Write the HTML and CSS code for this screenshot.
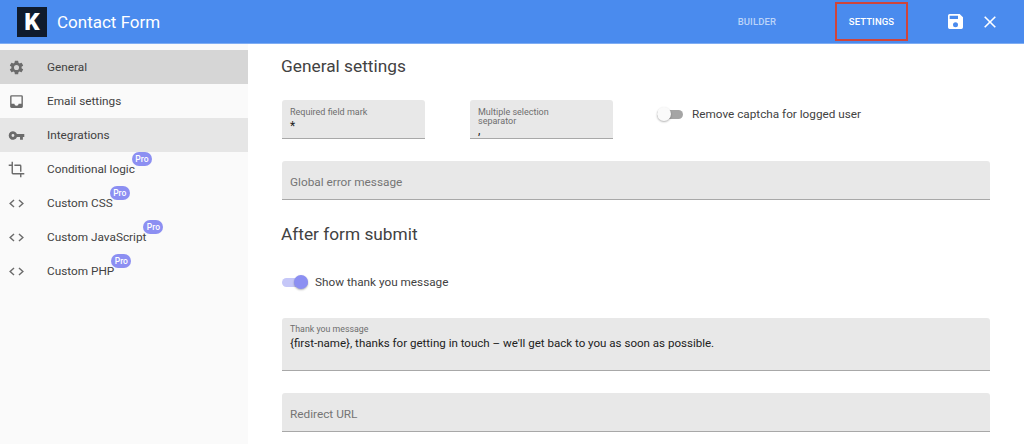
FILE: index.html
```html
<!DOCTYPE html>
<html lang="en">
<head>
  <meta charset="UTF-8">
  <title>Contact Form</title>
  <link rel="stylesheet" href="styles.css">
</head>
<body>
  <header class="topbar">
    <div class="logo">K</div>
    <h1>Contact Form</h1>
    <nav class="tabs">
      <a class="tab tab-builder">BUILDER</a>
      <a class="tab tab-settings">SETTINGS</a>
    </nav>
    <button class="icon-btn save-btn" aria-label="Save">
      <svg width="15" height="15" viewBox="3 3 18 18"><path fill="#fff" d="M17 3H5a2 2 0 0 0-2 2v14a2 2 0 0 0 2 2h14a2 2 0 0 0 2-2V7l-4-4zm-5 16a3 3 0 1 1 0-6 3 3 0 0 1 0 6zm3-10H5V5h10v4z"/></svg>
    </button>
    <button class="icon-btn close-btn" aria-label="Close">
      <svg width="12" height="12" viewBox="0 0 12 12"><path stroke="#fff" stroke-width="1.6" fill="none" d="M.7.7l10.6 10.6M11.3.7L.7 11.3"/></svg>
    </button>
  </header>

  <div class="layout">
    <aside class="sidebar">
      <ul class="menu">
        <li class="menu-item active">
          <svg class="menu-icon" width="17" height="17" viewBox="0 0 24 24"><path fill="#6b6b6b" d="M19.14 12.94c.04-.3.06-.61.06-.94s-.02-.64-.07-.94l2.03-1.58a.49.49 0 0 0 .12-.61l-1.92-3.32a.49.49 0 0 0-.59-.22l-2.39.96a7 7 0 0 0-1.62-.94l-.36-2.54a.48.48 0 0 0-.48-.41h-3.84a.47.47 0 0 0-.47.41l-.36 2.54c-.59.24-1.13.57-1.62.94l-2.39-.96a.49.49 0 0 0-.59.22L2.74 8.87a.48.48 0 0 0 .12.61l2.03 1.58c-.05.3-.09.63-.09.94s.02.64.07.94l-2.03 1.58a.49.49 0 0 0-.12.61l1.92 3.32c.12.22.37.29.59.22l2.39-.96c.5.38 1.03.7 1.62.94l.36 2.54c.05.24.24.41.48.41h3.84c.24 0 .44-.17.47-.41l.36-2.54c.59-.24 1.13-.56 1.62-.94l2.39.96c.22.08.47 0 .59-.22l1.92-3.32a.47.47 0 0 0-.12-.61l-2.01-1.58zM12 15.6a3.6 3.6 0 1 1 0-7.2 3.6 3.6 0 0 1 0 7.2z"/></svg>
          General
        </li>
        <li class="menu-item">
          <svg class="menu-icon" width="17" height="17" viewBox="0 0 24 24"><path fill="#6b6b6b" d="M19 3H5a2 2 0 0 0-2 2v14a2 2 0 0 0 2 2h14a2 2 0 0 0 2-2V5a2 2 0 0 0-2-2zm0 12h-4a3 3 0 0 1-6 0H5V5h14v10z"/></svg>
          Email settings
        </li>
        <li class="menu-item shaded">
          <svg class="menu-icon" width="17" height="17" viewBox="0 0 24 24"><path fill="#6b6b6b" d="M12.65 10A6 6 0 1 0 12.65 14H17v4h4v-4h2v-4H12.65zM7 14a2 2 0 1 1 0-4 2 2 0 0 1 0 4z"/></svg>
          Integrations
        </li>
        <li class="menu-item">
          <svg class="menu-icon" width="17" height="17" viewBox="0 0 24 24"><path fill="#6b6b6b" d="M17 15h2V7a2 2 0 0 0-2-2H9v2h8v8zM7 17V1H5v4H1v2h4v10a2 2 0 0 0 2 2h10v4h2v-4h4v-2H7z"/></svg>
          <span class="pro-wrap">Conditional logic<span class="pro">Pro</span></span>
        </li>
        <li class="menu-item">
          <svg class="menu-icon" width="17" height="17" viewBox="0 0 24 24"><path fill="none" stroke="#6b6b6b" stroke-width="2" d="M8.5 7L3 12l5.500 5M15.500 7L21 12l-5.500 5"/></svg>
          <span class="pro-wrap">Custom CSS<span class="pro">Pro</span></span>
        </li>
        <li class="menu-item">
          <svg class="menu-icon" width="17" height="17" viewBox="0 0 24 24"><path fill="none" stroke="#6b6b6b" stroke-width="2" d="M8.5 7L3 12l5.500 5M15.500 7L21 12l-5.500 5"/></svg>
          <span class="pro-wrap">Custom JavaScript<span class="pro">Pro</span></span>
        </li>
        <li class="menu-item">
          <svg class="menu-icon" width="17" height="17" viewBox="0 0 24 24"><path fill="none" stroke="#6b6b6b" stroke-width="2" d="M8.5 7L3 12l5.500 5M15.500 7L21 12l-5.500 5"/></svg>
          <span class="pro-wrap">Custom PHP<span class="pro">Pro</span></span>
        </li>
      </ul>
    </aside>

    <main class="content">
      <h2 class="first-title">General settings</h2>

      <div class="field-row">
        <div class="field small">
          <label>Required field mark</label>
          <div class="value">*</div>
        </div>
        <div class="field small">
          <label>Multiple selection<br>separator</label>
          <div class="value tight">,</div>
        </div>
        <div class="switch-row">
          <span class="switch"><span class="knob"></span></span>
          <span>Remove captcha for logged user</span>
        </div>
      </div>

      <div class="field plain">Global error message</div>

      <h2 class="second-title">After form submit</h2>

      <div class="switch-row on-row">
        <span class="switch on"><span class="knob"></span></span>
        <span>Show thank you message</span>
      </div>

      <div class="field message">
        <label>Thank you message</label>
        <div class="value">{first-name}, thanks for getting in touch – we'll get back to you as soon as possible.</div>
      </div>

      <div class="field plain">Redirect URL</div>
    </main>
  </div>
</body>
</html>
```

FILE: styles.css
```css
* {
  box-sizing: border-box;
  margin: 0;
  padding: 0;
}

html,
body {
  height: 100%;
  overflow: hidden;
}

body {
  font-family: Roboto, "Liberation Sans", sans-serif;
  color: #424242;
  background: #fff;
}

.topbar {
  display: flex;
  align-items: center;
  height: 44px;
  padding-left: 17px;
  background: #4a8bee;
  border-bottom: 1px solid #7fadf3;
  color: #fff;
}

.logo {
  width: 30px;
  height: 30px;
  background: #0f1b2d;
  color: #fff;
  font-size: 24px;
  font-weight: 900;
  line-height: 30px;
  text-align: center;
}

.topbar h1 {
  margin-left: 10px;
  font-size: 17px;
  font-weight: 400;
}

.tabs {
  display: flex;
  align-items: center;
  margin-left: auto;
}

.tab {
  font-size: 9.5px;
  font-weight: 500;
  letter-spacing: 0.1px;
}

.tab-builder {
  color: #bcd4f9;
  margin-right: 59px;
}

.tab-settings {
  display: flex;
  align-items: center;
  justify-content: center;
  width: 73px;
  height: 39px;
  border: 2px solid #d0453a;
}

.icon-btn {
  display: flex;
  background: none;
  border: none;
}

.save-btn {
  margin-left: 40px;
}

.close-btn {
  margin-left: 21px;
  margin-right: 28px;
}

.layout {
  display: flex;
  height: 400px;
}

.sidebar {
  flex: none;
  width: 248px;
  padding-top: 6px;
  background: #fafafa;
}

.menu {
  list-style: none;
}

.menu-item {
  display: flex;
  align-items: center;
  height: 34px;
  padding: 0 0 0 8px;
  font-size: 11.8px;
  color: #424242;
}

.menu-item.active {
  background: #d6d6d6;
}

.menu-item.shaded {
  background: #e6e6e6;
}

.menu-icon {
  flex: none;
  margin-right: 22px;
}

.pro-wrap {
  position: relative;
}

.pro {
  position: absolute;
  top: -10px;
  right: -17px;
  width: 20px;
  height: 14px;
  border-radius: 7px;
  background: #8c8ff2;
  color: #fff;
  font-size: 8.5px;
  font-weight: 500;
  line-height: 14px;
  text-align: center;
}

.content {
  flex: 1;
  padding: 11px 34px 0;
}

h2 {
  margin-left: -1px;
  font-size: 17.3px;
  font-weight: 400;
  line-height: 22px;
  color: #424242;
}

.field-row {
  display: flex;
  align-items: flex-start;
  margin-top: 23px;
}

.field {
  background: #e8e8e8;
  border-bottom: 1px solid #a8a8a8;
  border-radius: 3px 3px 0 0;
  padding-left: 8px;
}

.field.small {
  width: 143px;
  height: 39px;
  margin-right: 45px;
  padding-top: 8px;
}

.field label {
  display: block;
  font-size: 9px;
  line-height: 9px;
  color: #6e6e6e;
}

.field .value {
  font-size: 12px;
  line-height: 12px;
  color: #212121;
  margin-top: 3px;
}

.field .value.tight {
  margin-top: -2px;
}

.switch-row {
  display: flex;
  align-items: center;
  font-size: 11.75px;
  color: #424242;
}

.field-row .switch-row {
  margin-top: 7px;
  margin-left: -1px;
}

.switch {
  position: relative;
  width: 26px;
  height: 9px;
  margin-right: 9px;
  border-radius: 5px;
  background: #a5a5a5;
}

.knob {
  position: absolute;
  left: 0;
  top: -3px;
  width: 14px;
  height: 14px;
  border-radius: 50%;
  background: #fafafa;
  box-shadow: 0 1px 2px rgba(0, 0, 0, 0.3);
}

.switch.on {
  background: #c5c7f8;
  margin-right: 7px;
}

.switch.on .knob {
  left: 12px;
  background: #8c8ff2;
}

.field.plain {
  display: flex;
  align-items: center;
  height: 39px;
  margin-top: 22px;
  padding-top: 3px;
  font-size: 11.8px;
  color: #757575;
}

.second-title {
  margin-top: 23px;
}

.on-row {
  height: 20px;
  margin-top: 27px;
}

.field.message {
  height: 53px;
  margin-top: 26px;
  padding-top: 7px;
}

.field.message label {
  font-size: 8.8px;
}

.field.message .value {
  font-size: 11.55px;
  margin-top: 3px;
}
```
